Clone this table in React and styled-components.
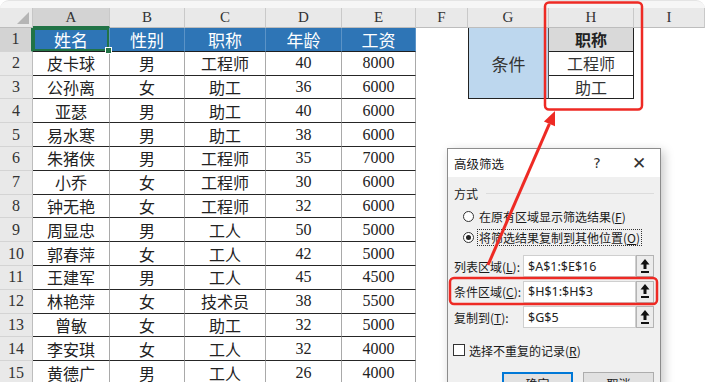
import React from "react";
import styled, { createGlobalStyle, css } from "styled-components";

const GlobalStyle = createGlobalStyle`
  html, body {
    margin: 0;
    padding: 0;
    background: #ffffff;
    overflow: hidden;
  }
  body {
    width: 705px;
    height: 382px;
  }
`;

const serif = `"Liberation Serif", "Noto Sans CJK SC", serif`;
const cjk = `"Noto Sans CJK SC", "Noto Sans", sans-serif`;

const rows = [
  ["皮卡球", "男", "工程师", "40", "8000"],
  ["公孙离", "女", "助工", "36", "6000"],
  ["亚瑟", "男", "助工", "40", "6000"],
  ["易水寒", "男", "助工", "38", "6000"],
  ["朱猪侠", "男", "工程师", "35", "7000"],
  ["小乔", "女", "工程师", "30", "6000"],
  ["钟无艳", "女", "工程师", "32", "6000"],
  ["周显忠", "男", "工人", "50", "5000"],
  ["郭春萍", "女", "工人", "42", "5000"],
  ["王建军", "男", "工人", "45", "4500"],
  ["林艳萍", "女", "技术员", "38", "5500"],
  ["曾敏", "女", "助工", "32", "5000"],
  ["李安琪", "女", "工人", "32", "4000"],
  ["黄德广", "男", "工人", "26", "4000"],
];

const heads = ["姓名", "性别", "职称", "年龄", "工资"];
const letters = ["A", "B", "C", "D", "E", "F", "G", "H", "I"];

const Page = styled.div`
  position: relative;
  width: 705px;
  height: 382px;
  overflow: hidden;
  background: #ffffff;
`;

const Frame = styled.div`
  padding-top: 7px;
  background: #f6f6f6;
  border-radius: 9px 9px 0 0;
  border-top: 1px solid #e4e4e4;
  box-sizing: border-box;
`;

const Sheet = styled.div`
  display: grid;
  grid-template-columns: 33px 77px 75px 81px 76px 74px 52px 81px 85px 1fr;
  grid-template-rows: 20px repeat(15, 23.8px);
  background: #ffffff;
`;

const Corner = styled.div`
  position: relative;
  background: #e9e9e9;
  border-right: 1px solid #c6c6c6;
  border-bottom: 1px solid #bdbdbd;
  &::after {
    content: "";
    position: absolute;
    right: 3px;
    bottom: 3px;
    border-style: solid;
    border-width: 0 0 12px 12px;
    border-color: transparent transparent #b5b5b5 transparent;
  }
`;

const ColHead = styled.div`
  display: flex;
  align-items: center;
  justify-content: center;
  background: ${(p) => (p.$active ? "#d3d3d3" : "#e9e9e9")};
  border-right: 1px solid #c9c9c9;
  border-bottom: ${(p) => (p.$active ? "2px solid #217346" : "1px solid #bdbdbd")};
  font-family: ${serif};
  font-size: 15px;
  color: #333;
  box-sizing: border-box;
`;

const RowHead = styled.div`
  display: flex;
  align-items: center;
  justify-content: center;
  background: ${(p) => (p.$active ? "#d3d3d3" : "#e9e9e9")};
  border-right: ${(p) => (p.$active ? "2px solid #217346" : "1px solid #bdbdbd")};
  border-bottom: 1px solid #d4d4d4;
  font-family: ${serif};
  font-size: 16px;
  color: #333;
  box-sizing: border-box;
`;

const variants = {
  head: css`
    background: #2e75b6;
    color: #ffffff;
    font-size: 17px;
    border-right: 1px solid #5b93c7;
    border-bottom: 1px solid #1f1f1f;
  `,
  data: css`
    background: #ffffff;
    color: #222;
    border-right: 1px solid #a9a9a9;
    border-bottom: 1px solid #262626;
  `,
  blank: css`
    background: #ffffff;
  `,
  cond: css`
    background: #bdd7ee;
    color: #333;
    border-left: 1px solid #222;
    border-bottom: 1px solid #222;
    border-right: 1px solid #555;
    grid-row: span 3;
    font-size: 17px;
  `,
  condHead: css`
    background: #d9d9d9;
    color: #222;
    font-weight: 700;
    border-right: 1px solid #222;
    border-bottom: 1px solid #222;
  `,
  condItem: css`
    background: #ffffff;
    color: #333;
    border-right: 1px solid #222;
    border-bottom: 1px solid #222;
  `,
};

const Cell = styled.div`
  position: relative;
  display: flex;
  align-items: center;
  justify-content: center;
  font-family: ${serif};
  font-size: 16px;
  box-sizing: border-box;
  ${(p) => variants[p.$kind]}
  ${(p) =>
    p.$selected &&
    css`
      box-shadow: inset 0 0 0 2px #217346;
      &::after {
        content: "";
        position: absolute;
        right: -3px;
        bottom: -3px;
        width: 5px;
        height: 5px;
        background: #217346;
        border: 1px solid #fff;
        z-index: 2;
      }
    `}
`;

const Overlay = styled.svg`
  position: absolute;
  left: 0;
  top: 0;
  pointer-events: none;
  z-index: 5;
`;

const Dialog = styled.div`
  position: absolute;
  left: 447px;
  top: 148px;
  width: 214px;
  height: 250px;
  box-sizing: border-box;
  background: #f0f0f0;
  border: 1px solid #8c8c8c;
  box-shadow: 3px 3px 10px rgba(0, 0, 0, 0.22);
  font-family: ${cjk};
  font-size: 12px;
  color: #1a1a1a;
  z-index: 3;
`;

const TitleBar = styled.div`
  display: flex;
  align-items: center;
  height: 28px;
  background: #ffffff;
  padding-left: 6px;
  font-size: 12.5px;
`;

const TitleText = styled.span`
  flex: 1;
`;

const TitleBtn = styled.span`
  width: 42px;
  text-align: center;
  font-family: "DejaVu Sans", sans-serif;
  font-size: ${(p) => (p.$big ? "17px" : "14px")};
  color: #333;
`;

const Body = styled.div`
  padding: 0 6px;
`;

const GroupHead = styled.div`
  display: flex;
  align-items: center;
  height: 16px;
  margin-top: 8px;
  &::after {
    content: "";
    flex: 1;
    margin-left: 8px;
    border-top: 1px solid #dcdcdc;
  }
`;

const RadioRow = styled.div`
  display: flex;
  align-items: center;
  height: 21px;
  margin-left: 9px;
  &:first-of-type {
    margin-top: 5px;
  }
`;

const Radio = styled.span`
  position: relative;
  width: 11px;
  height: 11px;
  border-radius: 50%;
  border: 1px solid #333;
  background: #fff;
  box-sizing: border-box;
  margin-right: 3px;
  ${(p) =>
    p.$on &&
    css`
      &::after {
        content: "";
        position: absolute;
        left: 2px;
        top: 2px;
        width: 5px;
        height: 5px;
        border-radius: 50%;
        background: #222;
      }
    `}
`;

const RadioText = styled.span`
  padding: 0 1px;
  border: 1px dotted ${(p) => (p.$focus ? "#333" : "transparent")};
  line-height: 15px;
`;

const Fields = styled.div`
  margin-top: 7px;
  display: flex;
  flex-direction: column;
  gap: 3.5px;
`;

const FieldRow = styled.div`
  display: flex;
  align-items: center;
  height: 22px;
`;

const FieldLabel = styled.span`
  width: 69px;
`;

const Input = styled.div`
  width: 113px;
  height: 22px;
  box-sizing: border-box;
  background: #ffffff;
  border: 1px solid #cfcfcf;
  padding-left: 4px;
  display: flex;
  align-items: center;
  font-family: "Noto Sans", "DejaVu Sans", sans-serif;
  font-size: 12.5px;
  color: #222;
`;

const PickBtn = styled.div`
  width: 18px;
  height: 22px;
  box-sizing: border-box;
  border: 1px solid #b4b4b4;
  background: #ececec;
  display: flex;
  align-items: center;
  justify-content: center;
`;

const CheckRow = styled.div`
  display: flex;
  align-items: center;
  margin-top: 15px;
  height: 14px;
`;

const CheckBox = styled.span`
  width: 12px;
  height: 12px;
  box-sizing: border-box;
  border: 1px solid #333;
  background: #fff;
  margin-right: 4px;
  margin-left: -1px;
`;

const ButtonRow = styled.div`
  display: flex;
  justify-content: flex-end;
  gap: 10px;
  margin-top: 15px;
`;

const DlgButton = styled.div`
  width: 71px;
  height: 22px;
  box-sizing: border-box;
  background: #e1e1e1;
  border: 1px solid ${(p) => (p.$default ? "#0078d7" : "#adadad")};
  box-shadow: ${(p) => (p.$default ? "inset 0 0 0 1px #0078d7" : "none")};
  display: flex;
  align-items: center;
  justify-content: center;
`;

const UpArrow = () => (
  <svg width="10" height="15" viewBox="0 0 10 15">
    <polygon points="5,0 9.5,5.5 6.5,5.5 6.5,10 3.5,10 3.5,5.5 0.5,5.5" fill="#111" />
    <rect x="1" y="12" width="8" height="2" fill="#111" />
  </svg>
);

const Field = ({ label, keyChar, value }) => (
  <FieldRow>
    <FieldLabel>
      {label}(<u>{keyChar}</u>):
    </FieldLabel>
    <Input>{value}</Input>
    <PickBtn>
      <UpArrow />
    </PickBtn>
  </FieldRow>
);

const renderRow = (r) => {
  const cells = [];
  const isHead = r === 1;
  const values = isHead ? heads : rows[r - 2];
  cells.push(
    <RowHead key={`rh${r}`} $active={isHead}>
      {r}
    </RowHead>
  );
  values.forEach((v, i) => {
    cells.push(
      <Cell key={`c${r}-${i}`} $kind={isHead ? "head" : "data"} $selected={isHead && i === 0}>
        {v}
      </Cell>
    );
  });
  cells.push(<Cell key={`f${r}`} $kind="blank" />);
  if (r === 1) {
    cells.push(
      <Cell key={`g${r}`} $kind="cond">
        条件
      </Cell>
    );
  } else if (r > 3) {
    cells.push(<Cell key={`g${r}`} $kind="blank" />);
  }
  if (r === 1) {
    cells.push(
      <Cell key={`h${r}`} $kind="condHead">
        职称
      </Cell>
    );
  } else if (r === 2) {
    cells.push(
      <Cell key={`h${r}`} $kind="condItem">
        工程师
      </Cell>
    );
  } else if (r === 3) {
    cells.push(
      <Cell key={`h${r}`} $kind="condItem">
        助工
      </Cell>
    );
  } else {
    cells.push(<Cell key={`h${r}`} $kind="blank" />);
  }
  cells.push(<Cell key={`i${r}`} $kind="blank" />);
  return cells;
};

export default function App() {
  return (
    <Page>
      <GlobalStyle />
      <Frame>
        <Sheet>
          <Corner />
          {letters.map((l, i) => (
            <ColHead key={l} $active={i === 0}>
              {l}
            </ColHead>
          ))}
          {Array.from({ length: 15 }, (_, i) => renderRow(i + 1))}
        </Sheet>
      </Frame>

      <Dialog>
        <TitleBar>
          <TitleText>高级筛选</TitleText>
          <TitleBtn>?</TitleBtn>
          <TitleBtn $big>✕</TitleBtn>
        </TitleBar>
        <Body>
          <GroupHead>方式</GroupHead>
          <div>
            <RadioRow>
              <Radio />
              <RadioText>
                在原有区域显示筛选结果(<u>F</u>)
              </RadioText>
            </RadioRow>
            <RadioRow>
              <Radio $on />
              <RadioText $focus>
                将筛选结果复制到其他位置(<u>O</u>)
              </RadioText>
            </RadioRow>
          </div>
          <Fields>
            <Field label="列表区域" keyChar="L" value="$A$1:$E$16" />
            <Field label="条件区域" keyChar="C" value="$H$1:$H$3" />
            <Field label="复制到" keyChar="T" value="$G$5" />
          </Fields>
          <CheckRow>
            <CheckBox />
            <span>
              选择不重复的记录(<u>R</u>)
            </span>
          </CheckRow>
          <ButtonRow>
            <DlgButton $default>确定</DlgButton>
            <DlgButton>取消</DlgButton>
          </ButtonRow>
        </Body>
      </Dialog>

      <Overlay width="705" height="382" viewBox="0 0 705 382">
        <rect x="545" y="2.5" width="97" height="107" rx="4" fill="none" stroke="#ee2a24" strokeWidth="2.5" />
        <rect x="450" y="278" width="207" height="26" rx="4" fill="none" stroke="#ee2a24" strokeWidth="2.5" />
        <line x1="488" y1="265" x2="549.4" y2="123.9" stroke="#ee2a24" strokeWidth="3" />
        <polygon points="555,111 555,126.3 543.9,121.5" fill="#ee2a24" />
      </Overlay>
    </Page>
  );
}
